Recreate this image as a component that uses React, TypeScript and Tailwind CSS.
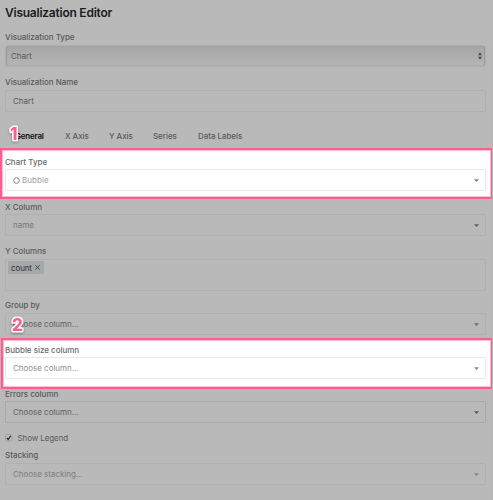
import React from "react";

function Label({ children, className = "" }: { children: React.ReactNode; className?: string }) {
  return (
    <div className={`h-3 whitespace-nowrap text-[8px] leading-3 font-medium tracking-[-0.02px] ${className}`}>{children}</div>
  );
}

function Caret({ className }: { className: string }) {
  return (
    <svg className={className} width="5" height="3" viewBox="0 0 5 3">
      <path d="M0 0.2H5L2.5 2.9Z" fill="currentColor" />
    </svg>
  );
}

function Select({ children, className, caret }: { children: React.ReactNode; className: string; caret: string }) {
  return (
    <div className={`flex h-[22px] w-[481px] items-center justify-between rounded-[1px] border pr-[6px] pl-[7px] text-[8px] tracking-[-0.03px] whitespace-nowrap ${className}`}>
      <span className="flex items-center">{children}</span>
      <Caret className={caret} />
    </div>
  );
}

function Marker({ children, className }: { children: string; className: string }) {
  return (
    <svg className={`absolute overflow-visible ${className}`} width="14" height="18">
      <text
        x="0"
        y="15"
        fontFamily="Inter, sans-serif"
        fontSize="17"
        fontWeight="800"
        fill="#ff5c8f"
        stroke="#ffffff"
        strokeWidth="3"
        strokeLinejoin="round"
        paintOrder="stroke"
        className="drop-shadow-[0_1px_1px_rgba(0,0,0,0.35)]"
      >
        {children}
      </text>
    </svg>
  );
}

export default function App() {
  return (
    <div className="relative h-[500px] w-[493px] overflow-hidden bg-[#b9b9b9] font-['Inter',sans-serif] text-[#595959]">
      <div className="absolute top-[45px] right-0 h-[455px] w-px bg-[#b5b5b5]" />
      <div className="px-[5px]">
        <h1 className="h-[31px] pt-[5px] text-[12px] leading-4 font-semibold tracking-[-0.24px] whitespace-nowrap text-[#1c1c1c]">Visualization Editor</h1>
        <Label>Visualization Type</Label>
        <div className="mt-[2px] flex h-[22px] w-[481px] items-center justify-between rounded-[3px] border border-[#aeaeae] bg-linear-to-b from-[#a6a6a6] to-[#b5b5b5] pr-[3px] pl-[5px] text-[8px] shadow-[inset_1px_0_1px_#9c9c9c,inset_-1px_0_1px_#999999]">
          <span>Chart</span>
          <svg width="4" height="8" viewBox="0 0 4 8" className="text-[#404040]">
            <path d="M0.2 3.3H3.8L2 0.3ZM0.2 4.7H3.8L2 7.7Z" fill="currentColor" />
          </svg>
        </div>
        <Label className="mt-[9px]">Visualization Name</Label>
        <div className="mt-[2px] flex h-[22px] w-[481px] items-center rounded-[1px] border border-[#afafaf] pl-[7px] text-[8px]">Chart</div>
        <nav className="mt-[18px] flex h-3 gap-[21px] pl-[10px] text-[8px] leading-3 font-medium whitespace-nowrap">
          <span className="w-[29px] font-semibold tracking-[-0.2px] text-[#101010]">General</span>
          <span className="w-[23px] tracking-[-0.08px]">X Axis</span>
          <span className="w-[23px] tracking-[-0.08px]">Y Axis</span>
          <span className="w-[24px] tracking-[-0.05px]">Series</span>
          <span className="tracking-[-0.05px]">Data Labels</span>
        </nav>
      </div>

      <section className="mt-[6px] h-[51px] w-[493px] border-2 border-[#ff5c8f] bg-white pt-[6px] pl-[3px] shadow-[inset_0_0_0_1px_#ff5c8f66]">
        <Label className="text-[#6a6a6a]">Chart Type</Label>
        <Select className="mt-px border-[#e8e8e8] text-[#a0a0a0]" caret="text-[#808080]">
          <svg width="7" height="7" viewBox="0 0 7 7" className="mr-[2px]">
            <circle cx="3.5" cy="3.5" r="2.8" fill="none" stroke="#858585" strokeWidth="1" />
          </svg>
          <span className="tracking-[0.05px]">Bubble</span>
        </Select>
      </section>

      <div className="px-[5px] pt-[2px]">
        <Label>X Column</Label>
        <Select className="mt-px border-[#afafaf] text-[#777777]" caret="text-[#606060]">name</Select>
        <Label className="mt-[9px]">Y Columns</Label>
        <div className="mt-[2px] h-[32px] w-[481px] rounded-[1px] border border-[#afafaf] pt-px pl-[2px]">
          <div className="flex h-[13px] w-9 items-center justify-between rounded-[1px] bg-[#a5a9ac] pr-1 pl-[3px] text-[8px] leading-3 tracking-[-0.12px] text-[#303030]">
            count
            <svg width="5" height="5" viewBox="0 0 5 5">
              <path d="M0.3 0.3L4.7 4.7M4.7 0.3L0.3 4.7" stroke="#404040" strokeWidth="0.9" />
            </svg>
          </div>
        </div>
        <Label className="mt-[8px]">Group by</Label>
        <Select className="mt-[2px] border-[#afafaf] text-[#626262]" caret="text-[#6b6b6b]">Choose column...</Select>
      </div>

      <section className="mt-[3px] ml-px h-[51px] w-[492px] border-2 border-[#ff5c8f] bg-white pt-[4px] pl-[2px] shadow-[inset_0_0_0_1px_#ff5c8f66]">
        <Label className="text-[#6a6a6a]">Bubble size column</Label>
        <Select className="mt-px border-[#e8e8e8] text-[#8f8f8f]" caret="text-[#8a8a8a]">Choose column...</Select>
      </section>

      <div className="px-[5px]">
        <Label className="-mt-px">Errors column</Label>
        <Select className="mt-px border-[#a9a9a9] text-[#626262]" caret="text-[#555555]">Choose column...</Select>
        <div className="mt-[9px] flex h-3 items-center gap-[4.5px] text-[8px] leading-3 tracking-[-0.1px]">
          <svg width="8" height="8" viewBox="0 0 8 8">
            <rect x="0.5" y="0.5" width="6.5" height="6.5" rx="1.2" fill="#bdbdbd" stroke="#929292" strokeWidth="0.7" />
            <path d="M1.8 3.9L3.2 5.5L5.7 1.7" fill="none" stroke="#1b1b1b" strokeWidth="1.1" />
          </svg>
          Show Legend
        </div>
        <Label className="mt-[5px]">Stacking</Label>
        <Select className="mt-[2px] border-[#b0b0b0] text-[#7d7d7d]" caret="text-[#858585]">Choose stacking...</Select>
      </div>

      <Marker className="top-[125px] left-[10px]">1</Marker>
      <Marker className="top-[316px] left-[12px]">2</Marker>
    </div>
  );
}
